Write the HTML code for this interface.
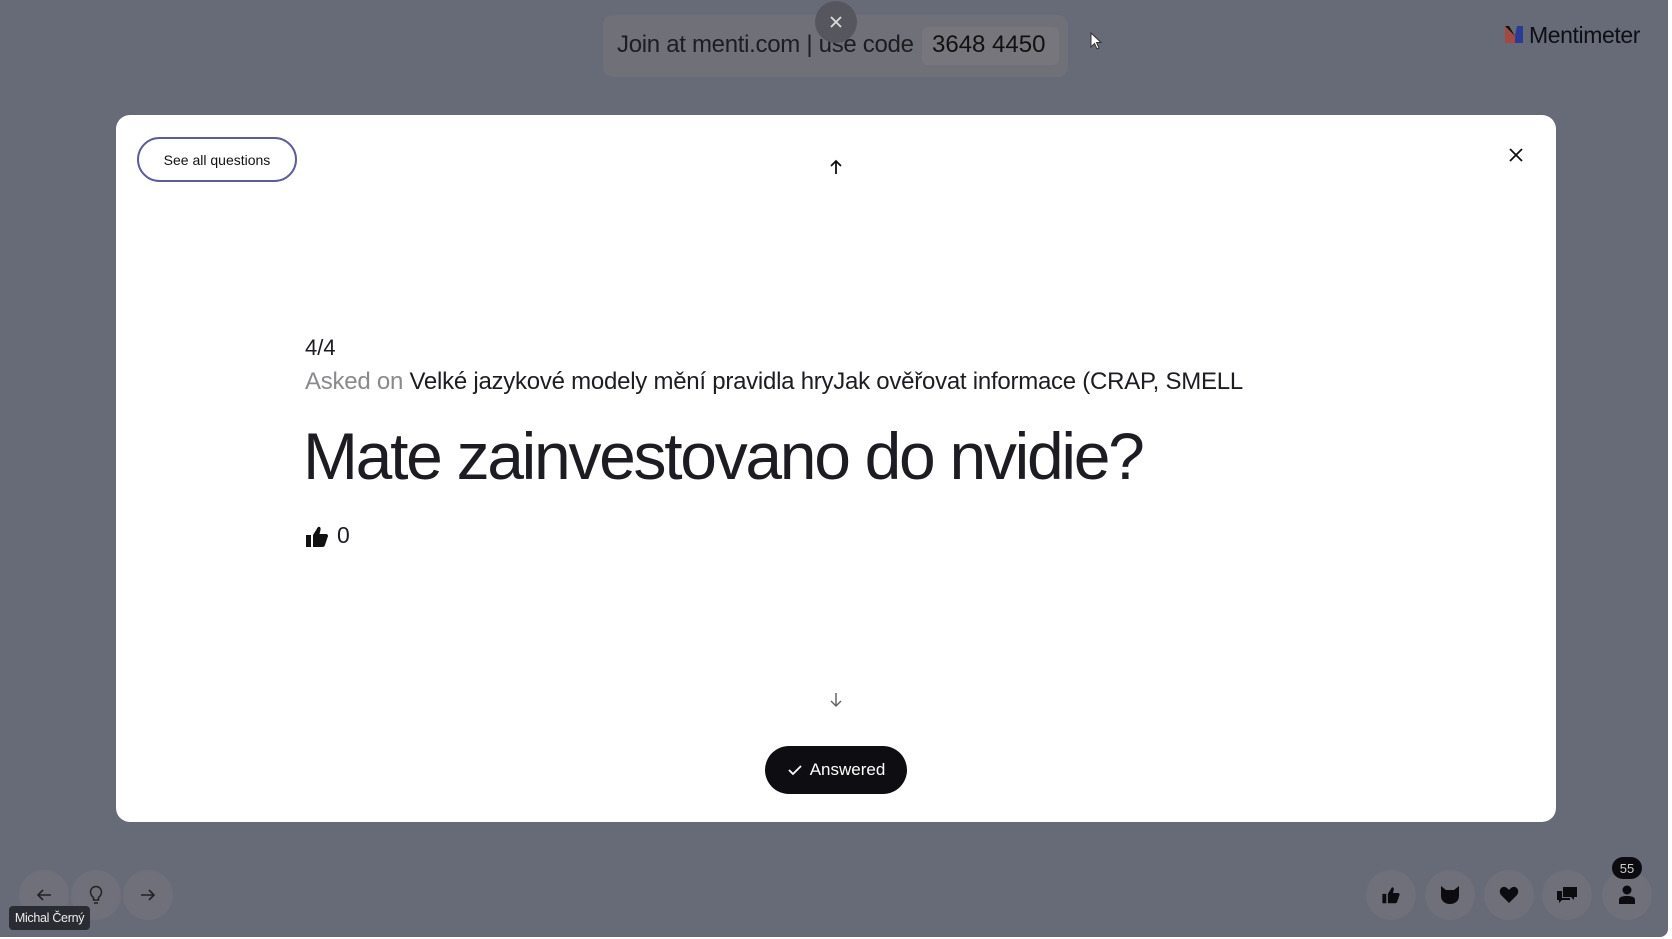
<!DOCTYPE html>
<html><head><meta charset="utf-8"><style>
*{margin:0;padding:0;box-sizing:border-box}
html,body{width:1672px;height:939px;overflow:hidden;background:#fff;font-family:"Liberation Sans",sans-serif}
#bg{position:absolute;left:0;top:0;width:1668px;height:937px;background:#676b78;border-bottom-right-radius:8px}
.abs{position:absolute}
.circ{position:absolute;width:50px;height:50px;border-radius:50%;background:#6f7079;display:flex;align-items:center;justify-content:center}
</style></head><body>
<div id="bg"></div>
<div class="abs" style="left:603px;top:15px;width:465px;height:62px;border-radius:10px;background:#707078"></div>
<div class="abs" style="left:922px;top:27px;width:137px;height:38px;border-radius:6px;background:#76767c"></div>
<div class="abs" style="left:617px;top:31px;font-size:24px;color:#1c1c22;white-space:nowrap;letter-spacing:-0.3px">Join at menti.com | use code</div>
<div class="abs" style="left:932px;top:31px;font-size:24px;color:#111;white-space:nowrap">3648 4450</div>
<div class="abs" style="left:815px;top:1px;width:42px;height:42px;border-radius:50%;background:#55565e;display:flex;align-items:center;justify-content:center">
<svg width="14" height="14" viewBox="0 0 14 14"><path d="M2 2L12 12M12 2L2 12" stroke="#ddd" stroke-width="1.8"/></svg></div>
<svg class="abs" style="left:1090px;top:32px" width="12" height="18" viewBox="0 0 12 18"><path d="M1 1V15L4.5 11.5L7 17L9 16L6.5 10.5H11Z" fill="#fff" stroke="#333" stroke-width="1"/></svg>
<svg class="abs" style="left:1505px;top:26px" width="18" height="17" viewBox="0 0 18 17"><path d="M0 0L10 10V17H0Z" fill="#a34a40"/><path d="M0 0H4L10 10Z" fill="#111"/><path d="M10 10L12 0H18V17H10Z" fill="#2d3a94"/></svg>
<div class="abs" style="left:1529px;top:22px;font-size:23px;color:#0e0f16;letter-spacing:-0.4px">Mentimeter</div>
<div class="abs" style="left:116px;top:115px;width:1440px;height:707px;background:#fff;border-radius:14px"></div>
<div class="abs" style="left:137px;top:137px;width:160px;height:45px;border:2px solid #5d5b9e;border-radius:23px;font-size:14px;color:#111;display:flex;align-items:center;justify-content:center">See all questions</div>
<svg class="abs" style="left:828px;top:159px" width="16" height="16" viewBox="0 0 16 16"><path d="M8 15V2M3 7L8 2L13 7" stroke="#111" stroke-width="1.8" fill="none"/></svg>
<svg class="abs" style="left:1508px;top:147px" width="16" height="16" viewBox="0 0 16 16"><path d="M2 2L14 14M14 2L2 14" stroke="#111" stroke-width="1.8"/></svg>
<div class="abs" style="left:305px;top:335px;font-size:22px;color:#1c1c22">4/4</div>
<div class="abs" style="left:305px;top:368px;font-size:24px;color:#1c1c22;white-space:nowrap;letter-spacing:-0.25px"><span style="color:#8a8a8e">Asked on</span> Velké jazykové modely mění pravidla hryJak ověřovat informace (CRAP, SMELL</div>
<div class="abs" style="left:303px;top:418px;font-size:66px;color:#1c1c22;white-space:nowrap;letter-spacing:-2.3px">Mate zainvestovano do nvidie?</div>
<svg class="abs" style="left:305px;top:525px" width="24" height="23" viewBox="0 0 24 23"><path d="M1 10H6V22H1Z M8 10L13 2C15 1 16 3 15.5 5L14.5 9H21C23 9 23.5 11 22.5 12.5L20 20C19.5 21.5 18.5 22 17 22H8Z" fill="#111"/></svg>
<div class="abs" style="left:337px;top:522px;font-size:23px;color:#1c1c22">0</div>
<svg class="abs" style="left:829px;top:692px" width="14" height="16" viewBox="0 0 14 16"><path d="M7 1V14M2 9L7 14L12 9" stroke="#666" stroke-width="1.5" fill="none"/></svg>
<div class="abs" style="left:765px;top:746px;width:142px;height:48px;border-radius:24px;background:#0e0e12;color:#fff;font-size:17px;display:flex;align-items:center;justify-content:center">
<svg width="16" height="14" viewBox="0 0 16 14" style="margin-right:7px"><path d="M2 7L6 11L14 3" stroke="#fff" stroke-width="1.8" fill="none"/></svg>Answered</div>
<div class="circ" style="left:19px;top:870px"><svg width="16" height="14" viewBox="0 0 16 14"><path d="M15 7H2M7 2L2 7L7 12" stroke="#222" stroke-width="1.6" fill="none"/></svg></div>
<div class="circ" style="left:71px;top:870px"><svg width="14" height="20" viewBox="0 0 14 20"><path d="M4.5 15V12.5C2.5 11 1.5 9 1.5 7A5.5 5.5 0 0 1 12.5 7C12.5 9 11.5 11 9.5 12.5V15ZM5 18H9" stroke="#222" stroke-width="1.5" fill="none"/></svg></div>
<div class="circ" style="left:123px;top:870px"><svg width="16" height="14" viewBox="0 0 16 14"><path d="M1 7H14M9 2L14 7L9 12" stroke="#222" stroke-width="1.6" fill="none"/></svg></div>
<div class="abs" style="left:9px;top:906px;width:81px;height:24px;border-radius:4px;background:#2a2c33;color:#eee;font-size:12.5px;display:flex;align-items:center;justify-content:center;letter-spacing:-0.3px">Michal Černý</div>
<div class="circ" style="left:1366px;top:870px"><svg width="20" height="18" viewBox="0 0 24 23"><path d="M1 10H6V22H1Z M8 10L13 2C15 1 16 3 15.5 5L14.5 9H21C23 9 23.5 11 22.5 12.5L20 20C19.5 21.5 18.5 22 17 22H8Z" fill="#0c0c10"/></svg></div>
<div class="circ" style="left:1425px;top:870px"><svg width="20" height="20" viewBox="0 0 20 20"><path d="M1 1L6 5H14L19 1V11C19 16 15 19 10 19C5 19 1 16 1 11Z" fill="#0c0c10"/></svg></div>
<div class="circ" style="left:1484px;top:870px"><svg width="20" height="18" viewBox="0 0 20 18"><path d="M10 17L2 9C-1 5 2 0 6 1C8 1.5 9 3 10 4C11 3 12 1.5 14 1C18 0 21 5 18 9Z" fill="#0c0c10"/></svg></div>
<div class="circ" style="left:1542px;top:870px"><svg width="22" height="18" viewBox="0 0 22 18"><path d="M7 1H21V11H18V14L15 11H7Z" fill="#0c0c10"/><path d="M1 5H6V12H14V14H6L3 17V14H1Z" fill="#0c0c10"/></svg></div>
<div class="circ" style="left:1602px;top:870px"><svg width="18" height="20" viewBox="0 0 18 20"><circle cx="9" cy="5" r="4.5" fill="#0c0c10"/><path d="M1 19V15C1 12 4 11 9 11C14 11 17 12 17 15V19Z" fill="#0c0c10"/></svg></div>
<div class="abs" style="left:1612px;top:857px;width:30px;height:22px;border-radius:11px;background:#0c0c10;color:#ccc;font-size:13px;display:flex;align-items:center;justify-content:center">55</div>
</body></html>
